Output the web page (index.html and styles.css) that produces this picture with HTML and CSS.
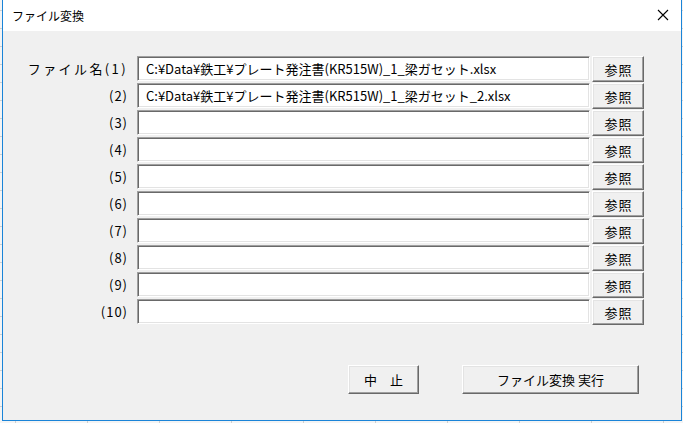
FILE: index.html
```html
<!DOCTYPE html>
<html lang="ja">
<head>
<meta charset="utf-8">
<title>ファイル変換</title>
<link rel="stylesheet" href="styles.css">
</head>
<body>
<div class="window">
  <div class="titlebar">
    <span class="title">ファイル変換</span>
    <svg class="close" width="12" height="12" viewBox="0 0 12 12"><path d="M1 1L11 11M11 1L1 11" stroke="#000" stroke-width="1.1" fill="none"/></svg>
  </div>
  <div class="content">
    <div class="grid">
      <div class="label first">ファイル名(1)</div>
      <div class="field">C:¥Data¥鉄工¥プレート発注書(KR515W)_1_梁ガセット.xlsx</div>
      <button class="btn ref">参照</button>

      <div class="label">(2)</div>
      <div class="field">C:¥Data¥鉄工¥プレート発注書(KR515W)_1_梁ガセット_2.xlsx</div>
      <button class="btn ref">参照</button>

      <div class="label">(3)</div>
      <div class="field"></div>
      <button class="btn ref">参照</button>

      <div class="label">(4)</div>
      <div class="field"></div>
      <button class="btn ref">参照</button>

      <div class="label">(5)</div>
      <div class="field"></div>
      <button class="btn ref">参照</button>

      <div class="label">(6)</div>
      <div class="field"></div>
      <button class="btn ref">参照</button>

      <div class="label">(7)</div>
      <div class="field"></div>
      <button class="btn ref">参照</button>

      <div class="label">(8)</div>
      <div class="field"></div>
      <button class="btn ref">参照</button>

      <div class="label">(9)</div>
      <div class="field"></div>
      <button class="btn ref">参照</button>

      <div class="label">(10)</div>
      <div class="field"></div>
      <button class="btn ref">参照</button>
    </div>
    <div class="footer">
      <button class="btn cancel">中　止</button>
      <button class="btn run">ファイル変換 実行</button>
    </div>
  </div>
</div>
</body>
</html>
```

FILE: styles.css
```css
html, body {
  margin: 0;
  padding: 0;
}
body {
  width: 683px;
  height: 423px;
  overflow: hidden;
  background-color: #f4f4f4;
  background-image:
    repeating-linear-gradient(to bottom, transparent 0 10px, #d0d0d0 10px 11px, transparent 11px 18px),
    repeating-linear-gradient(to right, transparent 0 15px, #d0d0d0 15px 16px, transparent 16px 72px);
  font-family: "Noto Sans CJK JP", "Noto Sans", sans-serif;
  color: #000;
}
.window {
  margin-left: 2px;
  width: 678px;
  height: 420px;
  border: 1px solid #1a84d8;
  border-top: none;
  background: #f0f0f0;
}
.titlebar {
  height: 31px;
  background: #fff;
  display: flex;
  align-items: center;
  justify-content: space-between;
  padding: 0 12px 0 9px;
}
.title {
  font-size: 12px;
  color: #000;
  padding-bottom: 1px;
}
.close {
  display: block;
  margin-top: -1px;
}
.content {
  padding-top: 25px;
}
.grid {
  display: grid;
  grid-template-columns: 125px 462px 54px;
  row-gap: 1px;
  grid-auto-rows: 26px;
  align-items: start;
}
.label {
  grid-column: 1;
  height: 25px;
  display: flex;
  align-items: center;
  justify-content: flex-end;
  font-size: 13px;
  letter-spacing: 1px;
  white-space: nowrap;
}
.label.first {
  letter-spacing: 2.4px;
}
.field {
  grid-column: 2;
  margin-left: 9px;
  width: 451px;
  height: 23px;
  background: #fff;
  border-top: 1px solid #a0a0a0;
  border-left: 1px solid #a0a0a0;
  border-right: 1px solid #fff;
  border-bottom: 1px solid #fff;
  box-shadow: inset 1px 1px 0 #696969, inset -1px -1px 0 #e3e3e3;
  font-size: 13px;
  line-height: 23px;
  text-indent: 8px;
  white-space: nowrap;
  overflow: hidden;
  box-sizing: content-box;
}
.btn {
  font-family: "Noto Sans CJK JP", "Noto Sans", sans-serif;
  font-size: 13px;
  color: #000;
  background: #f0f0f0;
  border-top: 1px solid #fff;
  border-left: 1px solid #fff;
  border-right: 1px solid #696969;
  border-bottom: 1px solid #696969;
  box-shadow: inset -1px -1px 0 #a0a0a0, inset 1px 1px 0 #e3e3e3;
  padding: 0;
  margin: 0;
  box-sizing: border-box;
}
.ref {
  grid-column: 3;
  margin-left: 2px;
  width: 52px;
  height: 26px;
  letter-spacing: 1px;
  padding-left: 1px;
}
.footer {
  display: flex;
  gap: 43px;
  padding-left: 345px;
  margin-top: 40px;
}
.cancel {
  width: 71px;
  height: 29px;
}
.run {
  width: 177px;
  height: 29px;
}
```
